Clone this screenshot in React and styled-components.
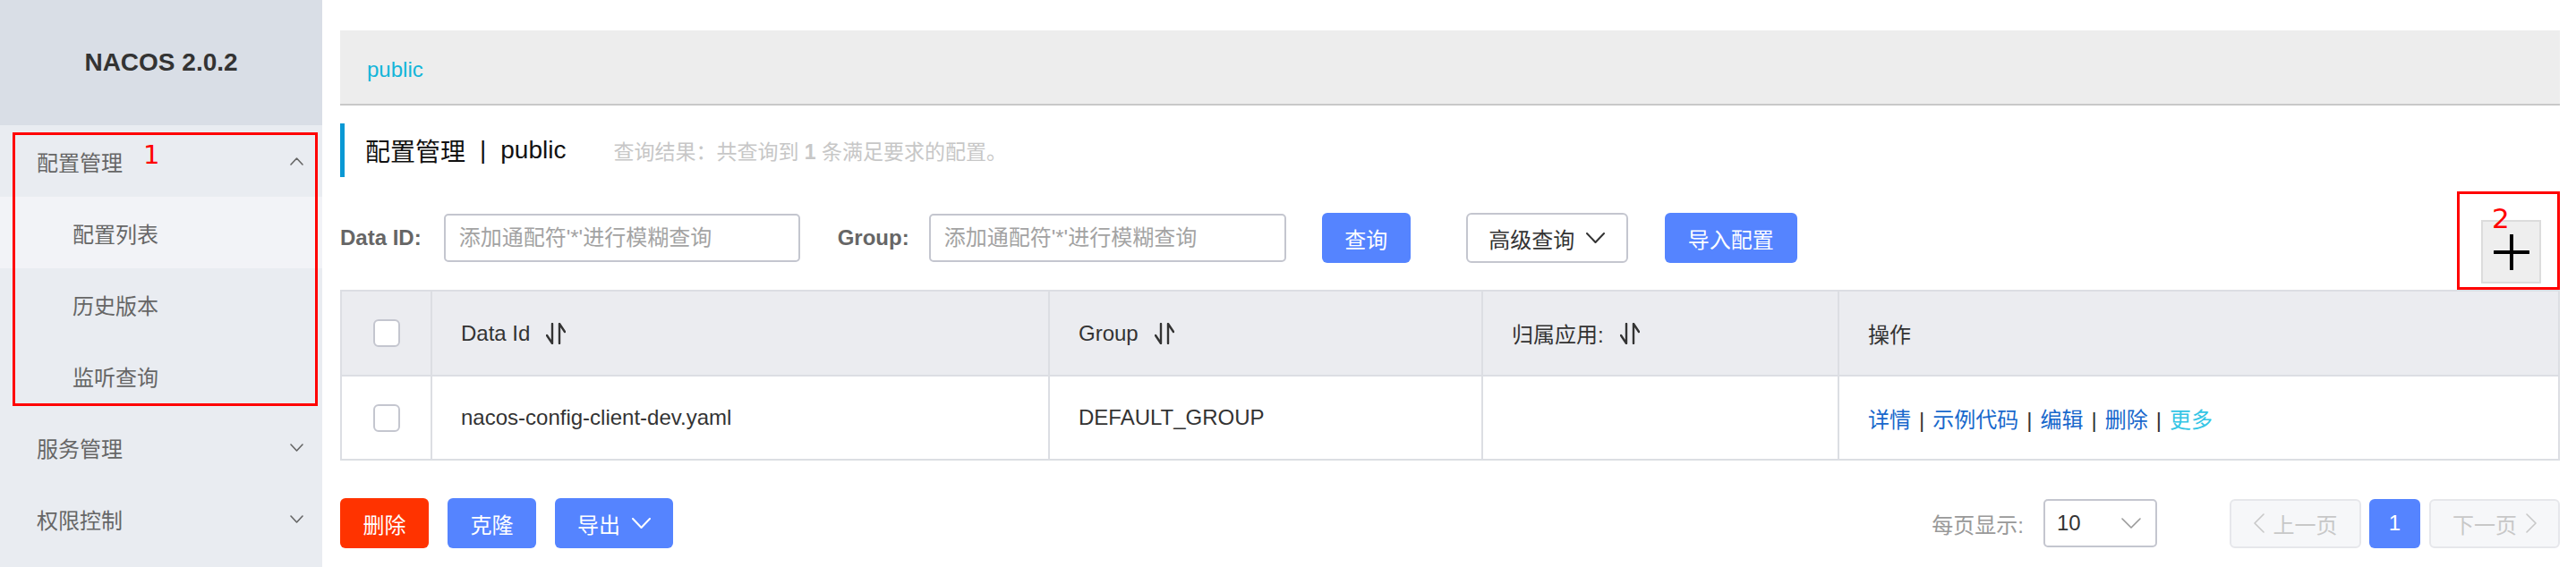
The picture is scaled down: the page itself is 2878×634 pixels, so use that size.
import React from 'react'
import styled, { createGlobalStyle } from 'styled-components'

const GlobalStyle = createGlobalStyle`
    html, body {
        margin: 0;
        padding: 0;
        background: #fff;
    }
    body {
        font-family: "Liberation Sans", "Noto Sans CJK SC", sans-serif;
        color: #333;
    }
`

const Layout = styled.div`
    display: flex;
    width: 2878px;
    height: 634px;
    overflow: hidden;
`

const Sidebar = styled.aside`
    width: 360px;
    flex-shrink: 0;
    background: #e9ecf1;
    display: flex;
    flex-direction: column;
`

const Brand = styled.div`
    height: 140px;
    background: #d9dee6;
    display: flex;
    align-items: center;
    justify-content: center;
    font-size: 28px;
    font-weight: bold;
    color: #333;
`

const MenuGroup = styled.div`
    position: relative;
`

const MenuItem = styled.div`
    height: 80px;
    display: flex;
    align-items: center;
    justify-content: space-between;
    padding: 0 21px 0 41px;
    font-size: 24px;
    color: #666;
`

const SubItem = styled.div`
    height: 80px;
    display: flex;
    align-items: center;
    padding-left: 81px;
    font-size: 24px;
    color: #666;
    background: ${(p) => (p.active ? '#f2f3f7' : 'transparent')};
`

const MarkBox = styled.div`
    position: absolute;
    top: 8px;
    left: 14px;
    right: 5px;
    bottom: 6px;
    border: 3px solid #ff0000;
    pointer-events: none;
`

const MarkNum = styled.span`
    position: absolute;
    left: ${(p) => p.left}px;
    top: ${(p) => p.top}px;
    font-family: "DejaVu Sans", sans-serif;
    font-size: ${(p) => p.size}px;
    line-height: 1;
    color: #ff0000;
`

const Main = styled.main`
    flex: 1;
    padding: 34px 18px 0 20px;
    display: flex;
    flex-direction: column;
`

const Breadcrumb = styled.div`
    height: 84px;
    box-sizing: border-box;
    background: #ededed;
    border-bottom: 2px solid #c8c8c8;
    display: flex;
    align-items: center;
    padding: 6px 0 0 30px;
    font-size: 24px;
    color: #13b5d9;
`

const TitleRow = styled.div`
    margin-top: 20px;
    height: 60px;
    border-left: 5px solid #0a98d4;
    display: flex;
    align-items: center;
    padding-left: 23px;
`

const Title = styled.h1`
    margin: 0;
    font-size: 28px;
    font-weight: normal;
    color: #111;
    display: flex;
    align-items: center;

    & > span {
        margin: 0 16px;
    }
`

const ResultHint = styled.span`
    margin-left: 53px;
    font-size: 23px;
    color: #c7c7c7;

    & > b {
        font-weight: bold;
    }
`

const FilterRow = styled.div`
    margin-top: 10px;
    display: flex;
    align-items: center;
`

const Label = styled.label`
    font-size: 24px;
    font-weight: bold;
    color: #666;
    margin-right: ${(p) => p.gap}px;
`

const Input = styled.input`
    width: ${(p) => p.w}px;
    height: 54px;
    box-sizing: border-box;
    border: 2px solid #c4c6cf;
    border-radius: 5px;
    padding: 0 15px;
    font-family: inherit;
    font-size: 24px;
    color: #333;
    margin-right: ${(p) => p.gap}px;
    outline: none;

    &::placeholder {
        color: #a3a3a3;
    }
`

const Btn = styled.button`
    height: 56px;
    min-width: ${(p) => p.w}px;
    box-sizing: border-box;
    padding: 0 22px;
    border-radius: 6px;
    border: ${(p) => (p.kind === 'normal' ? '2px solid #c4c6cf' : 'none')};
    background: ${(p) =>
        p.kind === 'danger' ? '#ff3300' : p.kind === 'normal' ? '#fff' : '#5584ff'};
    color: ${(p) => (p.kind === 'normal' ? '#333' : '#fff')};
    font-family: inherit;
    font-size: 24px;
    display: inline-flex;
    align-items: center;
    justify-content: center;
    gap: 13px;
    margin-right: ${(p) => p.gap || 0}px;
    cursor: pointer;
`

const AddMark = styled.div`
    position: relative;
    margin-left: auto;
    margin-top: 6px;
    width: 115px;
    height: 110px;
    box-sizing: border-box;
    border: 3px solid #ff0000;
    display: flex;
    align-items: flex-end;
    justify-content: flex-end;
    padding: 0 18px 4px 0;
`

const AddButton = styled.button`
    width: 67px;
    height: 71px;
    background: #eeeeee;
    border: 2px solid #dcdcdc;
    display: flex;
    align-items: center;
    justify-content: center;
    padding: 0;
`

const Table = styled.table`
    width: 100%;
    border-collapse: collapse;
    border: 2px solid #dcdee3;
    table-layout: fixed;
`

const Th = styled.th`
    height: 93px;
    background: #ebecf0;
    border: 2px solid #dcdee3;
    text-align: ${(p) => (p.center ? 'center' : 'left')};
    padding: 0 0 0 ${(p) => (p.center ? 0 : 32)}px;
    font-size: 24px;
    font-weight: normal;
    color: #333;
`

const Td = styled.td`
    height: 92px;
    border: 2px solid #dcdee3;
    text-align: ${(p) => (p.center ? 'center' : 'left')};
    padding: 0 0 0 ${(p) => (p.center ? 0 : 32)}px;
    font-size: 24px;
    color: #333;
`

const HeadCell = styled.div`
    display: flex;
    align-items: center;
    gap: 18px;
`

const Checkbox = styled.span`
    display: inline-block;
    width: 30px;
    height: 31px;
    box-sizing: border-box;
    border: 2px solid #c4c6cf;
    border-radius: 6px;
    background: #fff;
    vertical-align: middle;
`

const Link = styled.a`
    color: ${(p) => (p.more ? '#33c5e5' : '#1868cc')};
    text-decoration: none;
`

const Sep = styled.span`
    margin: 0 9px;
    color: #333;
`

const Footer = styled.div`
    margin-top: 42px;
    display: flex;
    align-items: center;
    justify-content: space-between;
`

const Actions = styled.div`
    display: flex;
    gap: 21px;
`

const Pager = styled.div`
    display: flex;
    align-items: center;
`

const PageSizeLabel = styled.span`
    font-size: 24px;
    color: #999;
    margin-right: 22px;
`

const Select = styled.div`
    width: 127px;
    height: 54px;
    box-sizing: border-box;
    border: 2px solid #c4c6cf;
    border-radius: 5px;
    display: flex;
    align-items: center;
    justify-content: space-between;
    padding: 0 16px 0 13px;
    font-size: 24px;
    color: #333;
    margin-right: 81px;
`

const PageBtn = styled.button`
    height: 55px;
    width: ${(p) => p.w}px;
    box-sizing: border-box;
    border-radius: 6px;
    border: ${(p) => (p.current ? 'none' : '2px solid #e6e7eb')};
    background: ${(p) => (p.current ? '#5584ff' : '#f6f7f9')};
    color: ${(p) => (p.current ? '#fff' : '#c8c8c8')};
    font-family: inherit;
    font-size: 24px;
    display: inline-flex;
    align-items: center;
    justify-content: center;
    gap: 10px;
    margin-left: ${(p) => p.gap || 0}px;
    padding: 0;
`

function Chevron({ dir = 'down', w = 21, h = 12, color = '#333', sw = 2 }) {
    const d = {
        down: `M1 1 L${w / 2} ${h - 1} L${w - 1} 1`,
        up: `M1 ${h - 1} L${w / 2} 1 L${w - 1} ${h - 1}`,
        left: `M${w - 1} 1 L1 ${h / 2} L${w - 1} ${h - 1}`,
        right: `M1 1 L${w - 1} ${h / 2} L1 ${h - 1}`,
    }[dir]
    return (
        <svg width={w} height={h} viewBox={`0 0 ${w} ${h}`} fill="none">
            <path d={d} stroke={color} strokeWidth={sw} strokeLinecap="round" strokeLinejoin="round" />
        </svg>
    )
}

function SortIcon() {
    return (
        <svg width="22" height="24" viewBox="0 0 22 24" fill="none">
            <path d="M7 1 V23 L1 14" stroke="#333" strokeWidth="2.4" strokeLinecap="round" strokeLinejoin="round" />
            <path d="M15 23 V1 L21 10" stroke="#333" strokeWidth="2.4" strokeLinecap="round" strokeLinejoin="round" />
        </svg>
    )
}

function PlusIcon() {
    return (
        <svg width="40" height="40" viewBox="0 0 40 40">
            <path d="M20 1 V39 M1 20 H39" stroke="#000" strokeWidth="4" strokeLinecap="round" />
        </svg>
    )
}

const columns = [
    { key: 'id', title: 'Data Id', sort: true },
    { key: 'group', title: 'Group', sort: true },
    { key: 'app', title: '归属应用:', sort: true },
    { key: 'op', title: '操作' },
]

const rows = [{ id: 'nacos-config-client-dev.yaml', group: 'DEFAULT_GROUP', app: '' }]

const ops = ['详情', '示例代码', '编辑', '删除']

export default function App() {
    return (
        <Layout>
            <GlobalStyle />
            <Sidebar>
                <Brand>NACOS 2.0.2</Brand>
                <MenuGroup>
                    <MenuItem>
                        配置管理
                        <Chevron dir="up" w={15} h={9} color="#666" sw={1.6} />
                    </MenuItem>
                    <SubItem active>配置列表</SubItem>
                    <SubItem>历史版本</SubItem>
                    <SubItem>监听查询</SubItem>
                    <MarkBox />
                    <MarkNum left={160} top={19} size={29}>1</MarkNum>
                </MenuGroup>
                <MenuItem>
                    服务管理
                    <Chevron dir="down" w={15} h={9} color="#666" sw={1.6} />
                </MenuItem>
                <MenuItem>
                    权限控制
                    <Chevron dir="down" w={15} h={9} color="#666" sw={1.6} />
                </MenuItem>
            </Sidebar>
            <Main>
                <Breadcrumb>public</Breadcrumb>
                <TitleRow>
                    <Title>
                        配置管理<span>|</span>public
                    </Title>
                    <ResultHint>
                        查询结果：共查询到 <b>1</b> 条满足要求的配置。
                    </ResultHint>
                </TitleRow>
                <FilterRow>
                    <Label gap={25}>Data ID:</Label>
                    <Input w={398} gap={42} placeholder="添加通配符'*'进行模糊查询" />
                    <Label gap={22}>Group:</Label>
                    <Input w={399} gap={40} placeholder="添加通配符'*'进行模糊查询" />
                    <Btn w={99} gap={62}>查询</Btn>
                    <Btn kind="normal" w={181} gap={41}>
                        高级查询
                        <Chevron dir="down" />
                    </Btn>
                    <Btn w={148}>导入配置</Btn>
                    <AddMark>
                        <MarkNum left={36} top={12} size={31}>2</MarkNum>
                        <AddButton>
                            <PlusIcon />
                        </AddButton>
                    </AddMark>
                </FilterRow>
                <Table>
                    <colgroup>
                        <col style={{ width: 101 }} />
                        <col style={{ width: 690 }} />
                        <col style={{ width: 484 }} />
                        <col style={{ width: 398 }} />
                        <col />
                    </colgroup>
                    <thead>
                        <tr>
                            <Th center>
                                <Checkbox />
                            </Th>
                            {columns.map((c) => (
                                <Th key={c.key}>
                                    <HeadCell>
                                        {c.title}
                                        {c.sort && <SortIcon />}
                                    </HeadCell>
                                </Th>
                            ))}
                        </tr>
                    </thead>
                    <tbody>
                        {rows.map((r) => (
                            <tr key={r.id}>
                                <Td center>
                                    <Checkbox />
                                </Td>
                                <Td>{r.id}</Td>
                                <Td>{r.group}</Td>
                                <Td>{r.app}</Td>
                                <Td>
                                    {ops.map((o) => (
                                        <React.Fragment key={o}>
                                            <Link>{o}</Link>
                                            <Sep>|</Sep>
                                        </React.Fragment>
                                    ))}
                                    <Link more>更多</Link>
                                </Td>
                            </tr>
                        ))}
                    </tbody>
                </Table>
                <Footer>
                    <Actions>
                        <Btn kind="danger" w={99}>删除</Btn>
                        <Btn w={99}>克隆</Btn>
                        <Btn w={132}>
                            导出
                            <Chevron dir="down" color="#fff" />
                        </Btn>
                    </Actions>
                    <Pager>
                        <PageSizeLabel>每页显示:</PageSizeLabel>
                        <Select>
                            10
                            <Chevron dir="down" w={22} h={12} color="#999" sw={1.6} />
                        </Select>
                        <PageBtn w={147}>
                            <Chevron dir="left" w={12} h={22} color="#c8c8c8" sw={1.6} />
                            上一页
                        </PageBtn>
                        <PageBtn current w={57} gap={9}>1</PageBtn>
                        <PageBtn w={146} gap={10}>
                            下一页
                            <Chevron dir="right" w={12} h={22} color="#c8c8c8" sw={1.6} />
                        </PageBtn>
                    </Pager>
                </Footer>
            </Main>
        </Layout>
    )
}
